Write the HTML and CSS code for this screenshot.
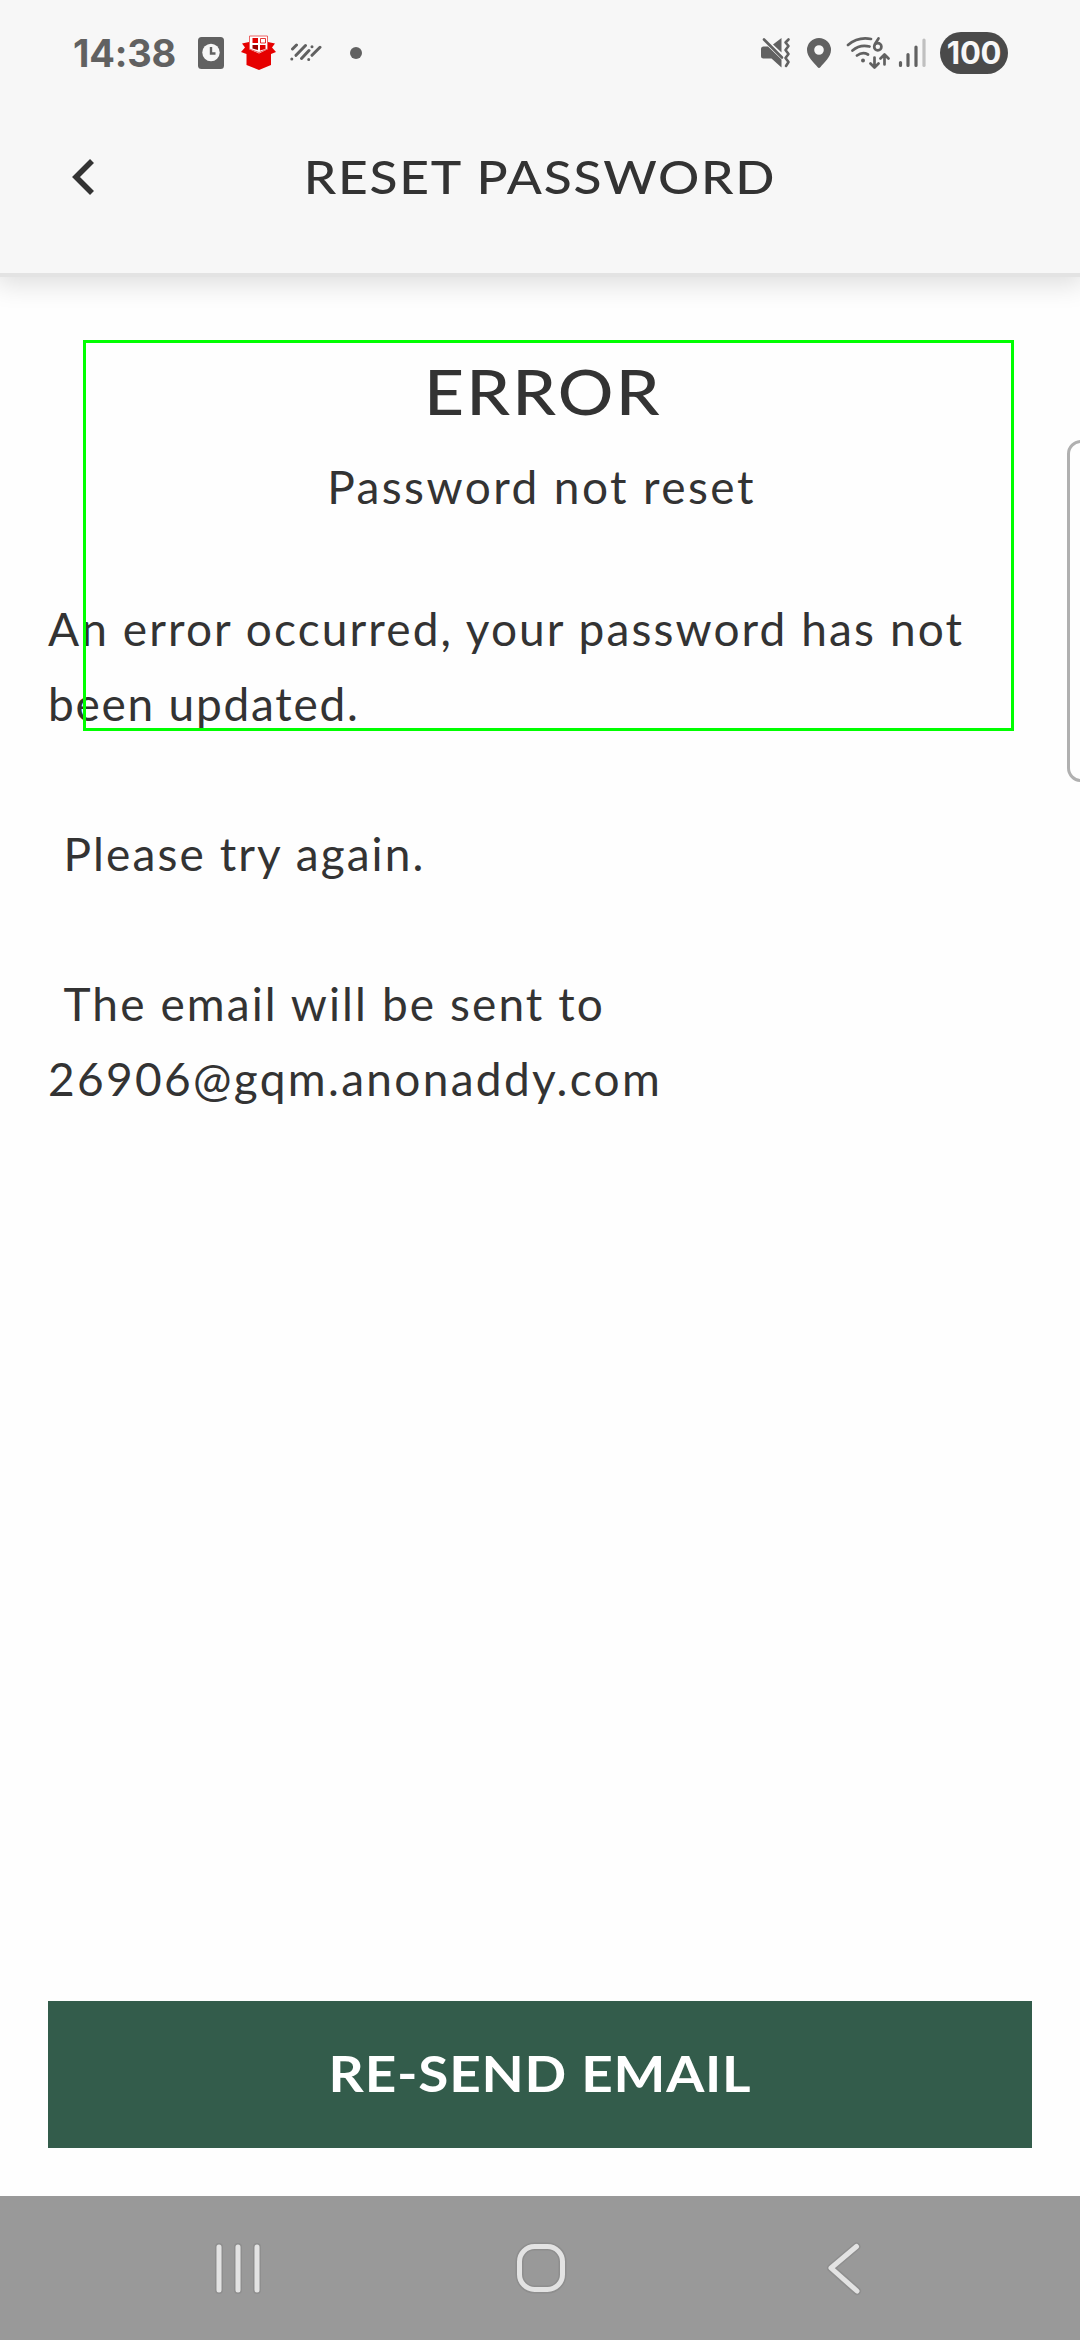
FILE: index.html
```
<!DOCTYPE html>
<html lang="en">
<head>
<meta charset="utf-8">
<title>Reset password</title>
<link rel="stylesheet" href="styles.css">
</head>
<body>
<div class="screen">
  <header class="header">
    <div class="status">
      <div class="status-left">
        <span class="time">14:38</span>
        <svg class="icon-clock" width="28" height="34" viewBox="0 0 28 34">
          <rect x="1" y="1" width="26" height="32" rx="3.5" fill="#616161"/>
          <circle cx="14" cy="16.5" r="8.7" fill="#f7f7f7"/>
          <path d="M14 11v6.5h4.5" fill="none" stroke="#616161" stroke-width="2.4"/>
        </svg>
        <svg class="icon-box" width="36" height="36" viewBox="0 0 36 36">
          <path d="M1 8.500 8 7v7l10 4.500L27 14V7l7 1.500-3 4 4 4.500-5 2v11L18 35 5.500 30V19L0 17l4-4.500z" fill="#e60000"/>
          <path d="M8.500 1h18v13L18 17.500 8.500 14z" fill="#fff" stroke="#e84040" stroke-width=".8"/>
          <path d="M11.500 3h5.500v5h-5.500z" fill="#e00000"/>
          <path d="M19.500 3.500h5v4.500h-5z" fill="#fff" stroke="#e00000" stroke-width=".8"/>
          <path d="M11.500 10h5.500v5l-5.500-1.500z" fill="#900"/>
          <path d="M19 10h5.500v4L19 15.500z" fill="#e00000"/>
        </svg>
        <svg class="icon-weather" width="32" height="20" viewBox="0 0 32 20" fill="none" stroke="#616161" stroke-width="3" stroke-linecap="round">
          <path d="M2.500 6 6.500 2M6 12.300 15.500 2.500M11.500 15.500 19 7.500M22 12.300 30 4.300M1.800 15.900v0M22 3.800v0M18.700 16.500v0"/>
        </svg>
        <span class="dot"></span>
      </div>
      <div class="status-right">
        <svg class="icon-mute" width="31" height="32" viewBox="0 0 31 32">
          <path d="M0 12Q0 9.500 2.500 9.500H7L20.500 22.500V30.500L10.500 21.500H2.500Q0 21.500 0 19z" fill="#616161"/>
          <path d="M12 7.500 20.500 1V15.500z" fill="#616161"/>
          <path d="M3 2.500 21 20.500" stroke="#616161" stroke-width="2.600" stroke-linecap="round"/>
          <path d="M27.500 2.500 24.500 5.500 27.500 9 24.500 13 27.500 17 24.500 21 27.500 25 25 29" fill="none" stroke="#616161" stroke-width="2.600" stroke-linecap="round" stroke-linejoin="round"/>
        </svg>
        <svg class="icon-pin" width="26" height="32" viewBox="0 0 26 32">
          <path fill-rule="evenodd" d="M13 1a12 12 0 0 1 12 12c0 7-7 12.500-10.500 17q-1.500 1.800-3 0C8 25.500 1 20 1 13A12 12 0 0 1 13 1zm0 7.200a4.800 4.800 0 1 0 0 9.600 4.800 4.800 0 0 0 0-9.600z" fill="#616161"/>
        </svg>
        <svg class="icon-wifi" width="44" height="34" viewBox="0 0 44 34" fill="none" stroke="#616161" stroke-width="2.700" stroke-linecap="round" stroke-linejoin="round">
          <path d="M2 9Q12 .5 25 3M6.500 14.500Q14 8 23.500 10.500M11 19.500Q16.500 15.500 22 18.500"/>
          <circle cx="17" cy="24.500" r="2" fill="#616161" stroke="none"/>
          <path d="M32.500 2.500 29 8"/>
          <circle cx="31.800" cy="10.800" r="3.600"/>
          <path d="M28.500 21.500V31M24.500 27.500l4 4 4-4M38.500 28.500V19M34.500 22.500l4-4 4 4"/>
        </svg>
        <svg class="icon-signal" width="28" height="32" viewBox="0 0 28 32" stroke-width="3.200" stroke-linecap="round">
          <path d="M2.500 25.500v3M10 17.500v11M18 10v18.500" stroke="#616161"/>
          <path d="M26 3v25.500" stroke="#c0c0c0"/>
        </svg>
        <span class="battery">100</span>
      </div>
    </div>
    <div class="titlebar">
      <svg class="back" width="25" height="38" viewBox="0 0 25 38">
        <path d="M21 3 5 19l16 16" fill="none" stroke="#333" stroke-width="5.600"/>
      </svg>
      <h1 class="title wide">RESET PASSWORD</h1>
    </div>
  </header>

  <main class="content">
    <h2 class="heading wide">ERROR</h2>
    <p class="subheading">Password not reset</p>
    <div class="message">
      <p>An error occurred, your password has not<br><span class="tight">been updated.</span></p>
      <p class="indent">Please try again.</p>
      <p class="indent">The email will be sent to<br><span class="address">26906@gqm.anonaddy.com</span></p>
    </div>
    <button class="resend"><span class="resend-label wide">RE-SEND EMAIL</span></button>
  </main>

  <nav class="navbar">
    <svg width="64" height="64" viewBox="0 0 64 64"><path class="halo" d="M13 11v43M32 11v43M51 11v43"/><path class="line" d="M13 11v43M32 11v43M51 11v43"/></svg>
    <svg width="64" height="64" viewBox="0 0 64 64"><rect class="halo" x="10.500" y="10.500" width="43" height="43" rx="15"/><rect class="line" x="10.500" y="10.500" width="43" height="43" rx="15"/></svg>
    <svg width="64" height="64" viewBox="0 0 64 64"><path class="halo" d="M44.500 10.500 19 32l26 23"/><path class="line" d="M44.500 10.500 19 32l26 23"/></svg>
  </nav>

  <div class="focus-frame"></div>
  <div class="edge-handle"></div>
</div>
</body>
</html>
```
FILE: styles.css
```
* { box-sizing: border-box; margin: 0; padding: 0; }

body {
  background: #fefefe;
  color: #333;
  font-family: Lato, "Open Sans", sans-serif;
}

.screen {
  position: relative;
  display: flex;
  flex-direction: column;
  width: 1080px;
  height: 2340px;
  overflow: hidden;
}

svg { display: block; flex: none; }

/* Extended capitals for headings and buttons */
.wide { transform: scaleX(1.12); }

/* Header */
.header {
  height: 273px;
  background: #f7f7f7;
  box-shadow: 0 4px 0 #e3e3e3, 0 6px 26px 4px rgba(0, 0, 0, .14);
}

.status {
  display: flex;
  justify-content: space-between;
  align-items: center;
  height: 106px;
  padding: 0 72px 0 73px;
}

.status-left, .status-right { display: flex; align-items: center; }

.time {
  width: 124px;
  font: 700 38px/40px Inter, sans-serif;
  letter-spacing: -.2px;
  color: #616161;
}

.icon-box { margin-left: 16px; }
.icon-weather { margin-left: 13px; }
.dot {
  width: 12px;
  height: 12px;
  margin-left: 28px;
  border-radius: 50%;
  background: #616161;
}

.icon-pin { margin-left: 14px; }
.icon-wifi { margin-left: 14px; }
.icon-signal { margin-left: 8px; }

.battery {
  width: 68px;
  height: 42px;
  margin-left: 14px;
  border-radius: 21px;
  background: #4a4a4a;
  color: #f7f7f7;
  font: 700 31px/42px Inter, sans-serif;
  letter-spacing: -.3px;
  text-align: center;
}

.titlebar {
  display: grid;
  grid-template-columns: 96px 1fr 96px;
  align-items: center;
  height: 75px;
  margin-top: 33px;
}

.back { margin-left: 71px; }

.title {
  font-size: 46px;
  font-weight: 500;
  line-height: 75px;
  letter-spacing: 1.6px;
  text-align: center;
}

/* Message */
.content {
  display: flex;
  flex-direction: column;
  height: 1923px;
  padding: 81px 48px 48px;
}

.heading {
  font-size: 62px;
  font-weight: 500;
  line-height: 75px;
  letter-spacing: 2px;
  text-align: center;
  text-indent: 5px;
}

.subheading {
  margin-top: 20px;
  font-size: 46px;
  line-height: 75px;
  letter-spacing: 2.42px;
  text-align: center;
  text-indent: 3px;
}

.message {
  display: flex;
  flex-direction: column;
  gap: 75px;
  margin-top: 67px;
  font-size: 46px;
  line-height: 75px;
  letter-spacing: 2.1px;
}

.indent { text-indent: 15.5px; }
.tight { letter-spacing: 1.75px; }
.address { letter-spacing: 2.32px; }

.resend {
  height: 147px;
  margin-top: auto;
  padding-bottom: 3px;
  border: 0;
  background: #335c4b;
  color: #fff;
  font: 700 49px/75px Lato, sans-serif;
  letter-spacing: .7px;
}

.resend-label { display: block; }

/* System navigation */
.navbar {
  display: flex;
  gap: 239px;
  height: 144px;
  padding: 40px 0 0 206px;
  background: #999;
}

.halo, .line {
  fill: none;
  stroke-linecap: round;
  stroke-linejoin: round;
}
.halo { stroke: #8e8e8e; stroke-width: 8px; }
.line { stroke: #e3e3e3; stroke-width: 5px; }

/* Overlays */
.focus-frame {
  position: absolute;
  left: 83px;
  top: 340px;
  width: 931px;
  height: 391px;
  border: 3px solid #0f0;
}

.edge-handle {
  position: absolute;
  left: 1067px;
  top: 440px;
  width: 30px;
  height: 342px;
  border: 3px solid #b0b0b0;
  border-radius: 14px;
}
```
